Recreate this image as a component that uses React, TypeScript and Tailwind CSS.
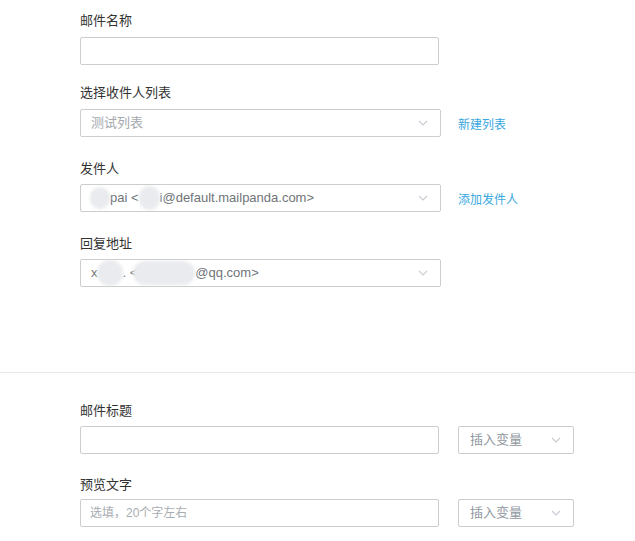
import React from "react";

const Chevron = () => (
  <svg width="10" height="6" viewBox="0 0 10 6" className="shrink-0">
    <path d="M1 1 L5 5 L9 1" fill="none" stroke="#c9ced5" strokeWidth="1.2" />
  </svg>
);

const Blob = ({ w, className = "" }: { w: string; className?: string }) => (
  <span
    className={`inline-block h-[22px] align-middle rounded-full bg-[#e9ebee] blur-[1.5px] ${w} ${className}`}
  />
);

const Label = ({ children }: { children: React.ReactNode }) => (
  <div className="h-5 leading-5 text-[13px] text-[#333]">{children}</div>
);

const SelectBox = ({ children, w }: { children: React.ReactNode; w: string }) => (
  <div
    className={`h-[28px] ${w} border border-[#cdcdcd] rounded-[2px] bg-white flex items-center justify-between pl-[10px] pr-[12px] overflow-hidden`}
  >
    <div className="text-[13px] whitespace-nowrap leading-5 flex items-center">{children}</div>
    <Chevron />
  </div>
);

export default function App() {
  return (
    <div className="w-[635px] h-[541px] bg-white overflow-hidden font-['Liberation_Sans','Noto_Sans_CJK_SC',sans-serif]">
      <div className="pl-[80px] pt-[11px]">
        <Label>邮件名称</Label>
        <div className="mt-[6px] h-[28px] w-[359px] border border-[#cdcdcd] rounded-[2px]" />

        <div className="mt-[18px]">
          <Label>选择收件人列表</Label>
        </div>
        <div className="mt-[6px] flex items-center gap-[17px]">
          <SelectBox w="w-[361px]">
            <span className="text-[#a3a9ae]">测试列表</span>
          </SelectBox>
          <span className="text-[12px] text-[#38a7e0] pt-[3px]">新建列表</span>
        </div>

        <div className="mt-[22px]">
          <Label>发件人</Label>
        </div>
        <div className="mt-[5px] flex items-center gap-[17px]">
          <SelectBox w="w-[361px]">
            <span className="text-[#6f7478] flex items-center">
              <Blob w="w-[20px]" className="-ml-[1px]" />
              <span>pai &lt;</span>
              <Blob w="w-[21px]" className="h-[24px]" />
              <span>i@default.mailpanda.com&gt;</span>
            </span>
          </SelectBox>
          <span className="text-[12px] text-[#38a7e0] pt-[3px]">添加发件人</span>
        </div>

        <div className="mt-[22px]">
          <Label>回复地址</Label>
        </div>
        <div className="mt-[5px] flex items-center">
          <SelectBox w="w-[361px]">
            <span className="text-[#6f7478] flex items-center">
              <span>x</span>
              <Blob w="w-[26px]" className="-ml-[1px] h-[26px]" />
              <span>. &lt;</span>
              <Blob w="w-[62px]" className="-ml-[4px] h-[24px] rounded-[10px]" />
              <span>@qq.com&gt;</span>
            </span>
          </SelectBox>
        </div>
      </div>

      <div className="mt-[85px] h-px bg-[#e8e8e8]" />

      <div className="pl-[80px] pt-[28px]">
        <Label>邮件标题</Label>
        <div className="mt-[5px] flex items-center gap-[19px]">
          <div className="h-[28px] w-[359px] border border-[#cdcdcd] rounded-[2px]" />
          <SelectBox w="w-[116px]">
            <span className="text-[#8f979e] pl-[1px]">插入变量</span>
          </SelectBox>
        </div>

        <div className="mt-[21px]">
          <Label>预览文字</Label>
        </div>
        <div className="mt-[4px] flex items-center gap-[19px]">
          <div className="h-[28px] w-[359px] border border-[#cdcdcd] rounded-[2px] flex items-center pl-[9px] text-[12px] text-[#a8adb1]">
            选填，20个字左右
          </div>
          <SelectBox w="w-[116px]">
            <span className="text-[#8f979e] pl-[1px]">插入变量</span>
          </SelectBox>
        </div>
      </div>
    </div>
  );
}
